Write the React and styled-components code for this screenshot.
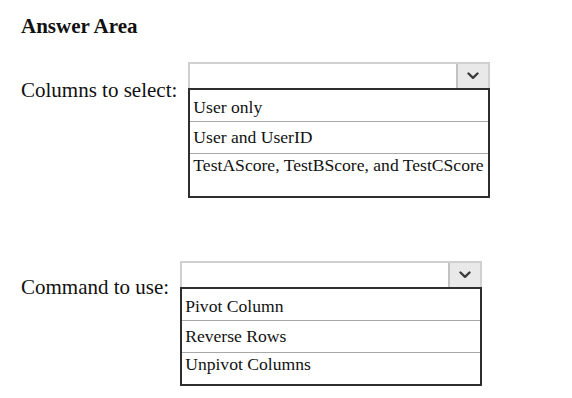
import React from 'react'
import styled, { createGlobalStyle } from 'styled-components';

const GlobalStyle = createGlobalStyle`
  body {
    margin: 0;
    background: #ffffff;
    font-family: "Liberation Serif", "Times New Roman", serif;
    color: #111111;
  }
`

const sections = [
  {
    label: 'Columns to select:',
    offset: 16,
    gap: 63,
    tail: 42,
    options: ['User only', 'User and UserID', 'TestAScore, TestBScore, and TestCScore'],
  },
  {
    label: 'Command to use:',
    offset: 14,
    gap: 0,
    tail: 31,
    options: ['Pivot Column', 'Reverse Rows', 'Unpivot Columns'],
  },
]

// text sits a little higher in each following row of the reference
const pads = [7, 5, 1]

function Chevron() {
  return (
    <svg width="12" height="8" viewBox="0 0 12 8">
      <path d="M1.5 1.5 L6 5.8 L10.5 1.5" fill="none" stroke="#3b3b3b" strokeWidth="2.4" strokeLinecap="round" strokeLinejoin="round" />
    </svg>
  )
}

function App() {
  return (
    <Page>
      <GlobalStyle />
      <Title>Answer Area</Title>
      {sections.map((s) => (
        <Section key={s.label} $gap={s.gap}>
          <Label $offset={s.offset}>{s.label}</Label>
          <Dropdown>
            <Select>
              <ArrowButton><Chevron /></ArrowButton>
            </Select>
            <List>
              {s.options.map((o, i) => (
                <Row key={o} $last={i === s.options.length - 1} $tail={s.tail} $pad={pads[i]}>{o}</Row>
              ))}
            </List>
          </Dropdown>
        </Section>
      ))}
    </Page>
  )
}

const Page = styled.div`
padding: 14px 0 0 21px;
display: flex;
flex-direction: column;
`
const Title = styled.div`
font-size: 21px;
font-weight: bold;
line-height: 24px;
margin-bottom: 24px;
`
const Section = styled.div`
display: flex;
align-items: flex-start;
gap: 11px;
margin-bottom: ${props => props.$gap}px;
`
const Label = styled.div`
font-size: 21px;
line-height: 24px;
margin-top: ${props => props.$offset}px;
white-space: nowrap;
`
const Dropdown = styled.div`
width: 302px;
display: flex;
flex-direction: column;
`
const Select = styled.div`
height: 26px;
box-sizing: border-box;
border: 2px solid #d0d0d0;
border-bottom: none;
display: flex;
justify-content: flex-end;
`
const ArrowButton = styled.div`
width: 32px;
height: 100%;
box-sizing: border-box;
background: #e9e9e9;
border-left: 2px solid #c2c2c2;
display: flex;
align-items: center;
justify-content: center;
`
const List = styled.ul`
list-style: none;
margin: 0;
padding: 0;
border: 2px solid #2e2e2e;
`
const Row = styled.li`
box-sizing: border-box;
height: ${props => props.$last ? props.$tail : 32}px;
padding: ${props => props.$pad}px 3px 0 3px;
font-size: 17.6px;
line-height: 20px;
white-space: nowrap;
border-bottom: ${props => props.$last ? 'none' : '1px solid #a8a8a8'};
`

export default App
